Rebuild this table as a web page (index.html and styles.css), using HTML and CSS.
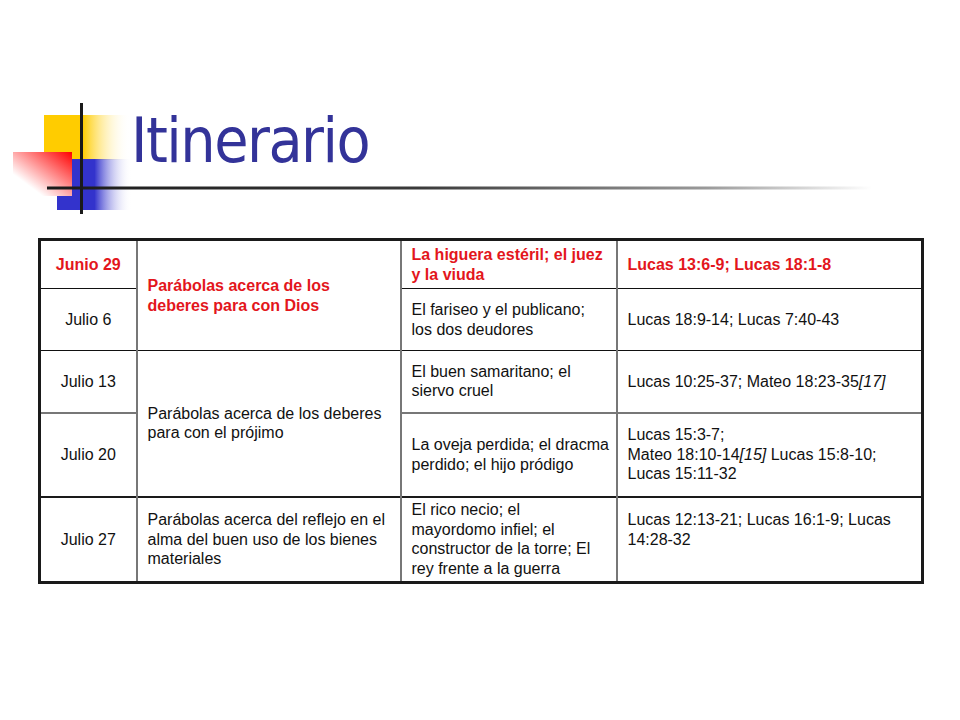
FILE: index.html
```html
<!DOCTYPE html>
<html lang="es">
<head>
<meta charset="utf-8">
<title>Itinerario</title>
<link rel="stylesheet" href="styles.css">
</head>
<body>
<div class="slide">
  <header class="header">
    <svg class="deco" width="960" height="239" viewBox="0 0 960 239" aria-hidden="true">
      <defs>
        <linearGradient id="gy" x1="0" y1="0" x2="1" y2="0">
          <stop offset="0" stop-color="#ffcc00"/>
          <stop offset="0.45" stop-color="#ffcc00"/>
          <stop offset="1" stop-color="#ffffff" stop-opacity="0"/>
        </linearGradient>
        <linearGradient id="gb" x1="0" y1="0" x2="1" y2="0">
          <stop offset="0" stop-color="#3333cc"/>
          <stop offset="0.5" stop-color="#3333cc"/>
          <stop offset="1" stop-color="#ffffff" stop-opacity="0"/>
        </linearGradient>
        <linearGradient id="gr" x1="1" y1="0" x2="0" y2="1">
          <stop offset="0" stop-color="#ff0000"/>
          <stop offset="0.75" stop-color="#ffffff"/>
          <stop offset="1" stop-color="#ffffff"/>
        </linearGradient>
        <linearGradient id="gl" x1="0" y1="0" x2="1" y2="0">
          <stop offset="0" stop-color="#1a1a1a"/>
          <stop offset="0.45" stop-color="#3a3a3a"/>
          <stop offset="0.8" stop-color="#9a9a9a"/>
          <stop offset="1" stop-color="#ffffff"/>
        </linearGradient>
      </defs>
      <rect x="44" y="115" width="86" height="45" fill="url(#gy)"/>
      <rect x="57" y="159" width="75" height="51" fill="url(#gb)"/>
      <rect x="13" y="152" width="59" height="44" fill="url(#gr)"/>
      <rect x="47" y="186.5" width="825" height="3" fill="url(#gl)"/>
      <rect x="80" y="103" width="3" height="111" fill="#1a1a1a"/>
    </svg>
    <h1 class="title">Itinerario</h1>
  </header>

  <table class="plan">
    <colgroup>
      <col class="c1"><col class="c2"><col class="c3"><col class="c4">
    </colgroup>
    <tbody>
      <tr class="r1">
        <td class="date red">Junio 29</td>
        <td class="red" rowspan="2">Parábolas acerca de los<br>deberes para con Dios</td>
        <td class="red">La higuera estéril; el juez<br>y la viuda</td>
        <td class="red">Lucas 13:6-9; Lucas 18:1-8</td>
      </tr>
      <tr class="r2">
        <td class="date">Julio 6</td>
        <td>El fariseo y el publicano;<br>los dos deudores</td>
        <td>Lucas 18:9-14; Lucas 7:40-43</td>
      </tr>
      <tr class="r3">
        <td class="date">Julio 13</td>
        <td rowspan="2">Parábolas acerca de los deberes<br>para con el prójimo</td>
        <td>El buen samaritano; el<br>siervo cruel</td>
        <td>Lucas 10:25-37; Mateo 18:23-35<i>[17]</i></td>
      </tr>
      <tr class="r4">
        <td class="date">Julio 20</td>
        <td>La oveja perdida; el dracma<br>perdido; el hijo pródigo</td>
        <td>Lucas 15:3-7;<br>Mateo 18:10-14<i>[15]</i> Lucas 15:8-10;<br>Lucas 15:11-32</td>
      </tr>
      <tr class="r5">
        <td class="date">Julio 27</td>
        <td>Parábolas acerca del reflejo en el<br>alma del buen uso de los bienes<br>materiales</td>
        <td>El rico necio; el<br>mayordomo infiel; el<br>constructor de la torre; El<br>rey frente a la guerra</td>
        <td>Lucas 12:13-21; Lucas 16:1-9; Lucas<br>14:28-32<br>&nbsp;</td>
      </tr>
    </tbody>
  </table>
</div>
</body>
</html>
```

FILE: styles.css
```css
html, body {
  margin: 0;
  padding: 0;
  background: #ffffff;
}

.slide {
  width: 960px;
  height: 720px;
  background: #ffffff;
  overflow: hidden;
}

.header {
  position: relative;
  height: 238px;
}

.deco {
  position: absolute;
  left: 0;
  top: 0;
}

.title {
  position: relative;
  margin: 0;
  padding: 110px 0 0 131px;
  font-family: "DejaVu Sans Condensed", "DejaVu Sans", sans-serif;
  font-stretch: condensed;
  font-weight: normal;
  font-size: 62px;
  line-height: 62px;
  letter-spacing: -1.5px;
  color: #333399;
}

.plan {
  margin-left: 38px;
  width: 883px;
  table-layout: fixed;
  border-collapse: collapse;
  border: 3px solid #1a1a1a;
  font-family: "Liberation Sans", Arial, sans-serif;
  font-size: 16px;
  line-height: 19.5px;
  color: #111111;
}

.c1 { width: 97px; }
.c2 { width: 264px; }
.c3 { width: 216px; }
.c4 { width: 306px; }

.plan td {
  padding: 2px 4px 2px 10px;
  vertical-align: middle;
  text-align: left;
  border-left: 2px solid #777777;
  border-right: 2px solid #777777;
  border-top: 1px solid #111111;
  border-bottom: 1px solid #111111;
}

.plan td.date {
  text-align: center;
  padding-left: 4px;
}

.plan i {
  font-style: italic;
}

.red {
  color: #e3161c;
  font-weight: bold;
}

.r1 { height: 49px; }
.r2 { height: 62px; }
.r3 { height: 62px; }
.r4 { height: 84px; }
.r5 { height: 86px; }

.r4 td { border-top: 2px solid #777777; }
.r3 td[rowspan] { border-bottom: 1px solid #111111; }
.r5 td { border-top: 2px solid #1a1a1a; }
```
